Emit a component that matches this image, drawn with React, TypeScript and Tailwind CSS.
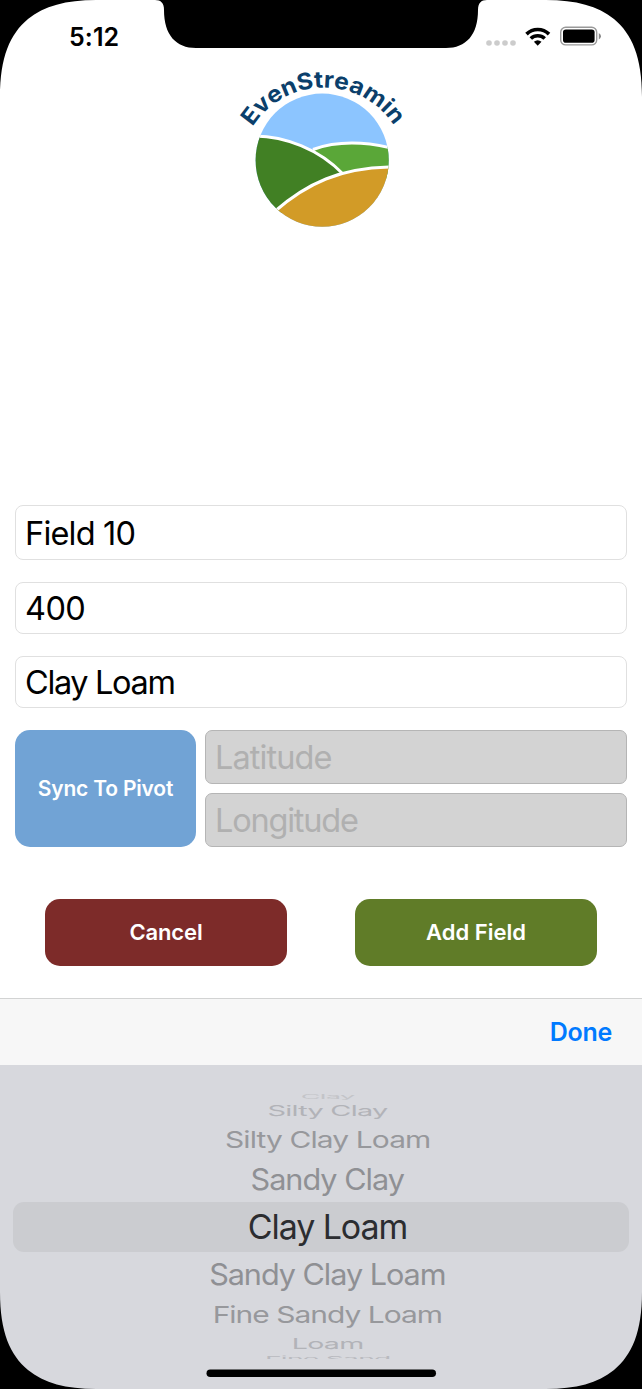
import React from "react";

const soils = [
  { name: "Clay", row: "mt-[27px] h-[9px]", text: "text-[#c3c4c8] tracking-[-0.9px] scale-x-[0.8] scale-y-[0.17]" },
  { name: "Silty Clay", row: "h-[20px]", text: "text-[#b2b3b8] tracking-[-0.9px] scale-x-[0.85] scale-y-[0.43]" },
  { name: "Silty Clay Loam", row: "h-[38px]", text: "text-[#97989c] tracking-[-1px] scale-x-[0.88] scale-y-[0.68]" },
  { name: "Sandy Clay", row: "h-[42px]", text: "text-[#8f9094] tracking-[-1.1px] scale-x-[0.9] scale-y-[0.87]" },
  { name: "Clay Loam", row: "h-[52px]", text: "text-[#2c2d30] tracking-[-1.1px]" },
  { name: "Sandy Clay Loam", row: "h-[43px]", text: "text-[#8f9094] tracking-[-1.15px] scale-x-[0.9] scale-y-[0.87]" },
  { name: "Fine Sandy Loam", row: "h-[38px]", text: "text-[#97989c] tracking-[-1.1px] scale-x-[0.88] scale-y-[0.68]" },
  { name: "Loam", row: "h-[20px]", text: "text-[#b2b3b8] tracking-[-0.9px] scale-x-[0.84] scale-y-[0.43]" },
  { name: "Fine Sand", row: "h-[9px]", text: "text-[#b9babf] tracking-[-0.9px] scale-x-[0.83] scale-y-[0.22]" },
];

function Logo() {
  return (
    <svg width="190" height="180" viewBox="225 60 190 180">
      <defs>
        <clipPath id="disc"><circle cx="322.2" cy="160.2" r="66.6" /></clipPath>
        <path id="arc" d="M252.500 127A84 84 0 0 1 396 129" />
      </defs>
      <g clipPath="url(#disc)">
        <rect x="250" y="90" width="145" height="140" fill="#8cc5ff" />
        <path d="M313 149.5Q348 137 395 149V180L343 175Z" fill="#5aa738" />
        <path d="M313 149.5Q348 137 395 149" fill="none" stroke="#fff" strokeWidth="3" />
        <path d="M250 136C285 135 320 150 343 174L278 215L250 225Z" fill="#418024" />
        <path d="M250 136C285 135 320 150 343 174" fill="none" stroke="#fff" strokeWidth="3" />
        <path d="M274 212C306 184 340 167 395 167V235H260Z" fill="#d29b27" />
        <path d="M274 212C306 184 340 167 395 167" fill="none" stroke="#fff" strokeWidth="3" />
      </g>
      <text fill="#0b3f6b" fontSize="23" fontWeight="700" className="font-[Inter,sans-serif]">
        <textPath href="#arc" textLength="168" lengthAdjust="spacingAndGlyphs">EvenStreamin</textPath>
      </text>
    </svg>
  );
}

function StatusIcons() {
  return (
    <svg className="ml-auto mt-[22px] mr-[38px]" width="120" height="28" viewBox="484 22 120 28">
      {[489, 497, 505, 513].map((x) => <circle key={x} cx={x} cy="43" r="2.8" fill="#ccc" />)}
      <g fill="none" stroke="#000" strokeWidth="3.6">
        <path d="M526.5 34.1A16 16 0 0 1 549 34.1" />
        <path d="M530.8 38.5A10 10 0 0 1 544.7 38.5" />
      </g>
      <path d="M533.9 41.7Q537.7 38.6 541.5 41.7L537.7 45.7Z" fill="#000" />
      <rect x="560.7" y="27.3" width="36" height="17.6" rx="5" fill="none" stroke="#999" strokeWidth="1.4" />
      <rect x="563" y="29.5" width="31.6" height="13.2" rx="2.8" fill="#000" />
      <path d="M598.8 33v6.4Q601 38 601 36.2T598.8 33Z" fill="#888" />
    </svg>
  );
}

function Bezel() {
  const corner = "M0 0H96C66 0 44 6 28 19C10 34 0 57 0 97Z";
  return (
    <svg className="pointer-events-none absolute inset-0" width="642" height="1389" viewBox="0 0 642 1389">
      <path d={corner} />
      <path d={corner} transform="translate(642 0) scale(-1 1)" />
      <path d={corner} transform="translate(0 1389) scale(1 -1)" />
      <path d={corner} transform="translate(642 1389) scale(-1 -1)" />
      <path d="M155 0C161 0 164 3 164 10C164 35 176 48 196 48H446C466 48 478 35 478 10C478 3 481 0 487 0Z" />
      <rect x="206.500" y="1369.500" width="229.500" height="7.500" rx="3.750" />
    </svg>
  );
}

export default function App() {
  return (
    <main className="relative flex h-[1389px] w-[642px] flex-col overflow-hidden bg-white font-[Inter,sans-serif] text-black">
      <header className="flex h-[60px]">
        <span className="ml-[69px] mt-[19px] text-[25px] leading-9 font-semibold tracking-[0.1px]">5:12</span>
        <StatusIcons />
      </header>
      <div className="flex h-[445px] justify-center pr-[2px]"><Logo /></div>
      <form className="flex flex-col px-[15px]">
        <div className="flex h-[55px] items-center rounded-[8px] border border-[#e0e0e0] px-[9px] pt-[3px] text-[32.500px] tracking-[-0.8px]">Field 10</div>
        <div className="mt-[22px] flex h-[52px] items-center rounded-[8px] border border-[#e0e0e0] px-[9px] pt-[2px] text-[32.500px] tracking-[-0.6px]">400</div>
        <div className="mt-[22px] flex h-[52px] items-center rounded-[8px] border border-[#e0e0e0] px-[9px] pt-[2px] text-[32.500px] tracking-[-1.35px]">Clay Loam</div>
        <div className="mt-[22px] flex h-[117px] gap-[9px]">
          <button type="button" className="w-[181px] rounded-[15px] bg-[#71a3d5] pt-[1px] text-[21px] font-semibold tracking-[-0.2px] text-white">Sync To Pivot</button>
          <div className="flex flex-1 flex-col gap-[9px] text-[32.500px] text-[#b0b0b0]">
            <div className="flex flex-1 items-center rounded-[7px] border border-[#b5b5b5] bg-[#d3d3d3] px-[9px] pt-[2px] tracking-[-0.9px]">Latitude</div>
            <div className="flex flex-1 items-center rounded-[7px] border border-[#b5b5b5] bg-[#d3d3d3] px-[9px] pt-[2px] tracking-[-1.2px]">Longitude</div>
          </div>
        </div>
        <div className="mt-[52px] flex h-[67px] justify-between px-[30px] text-[22px] font-semibold text-white">
          <button type="button" className="w-[242px] rounded-[15px] bg-[#7d2b29] tracking-[-0.15px]">Cancel</button>
          <button type="button" className="w-[242px] rounded-[15px] bg-[#607c28]">Add Field</button>
        </div>
      </form>
      <div className="mt-[32px] flex h-[67px] items-center justify-end border-t border-[#d2d3d3] bg-[#f7f7f7] pt-[2px] pr-[30px] text-[25px] font-semibold tracking-[-0.3px] text-[#007aff]">Done</div>
      <section className="relative flex flex-1 flex-col bg-[#d7d8dd] text-[34px] leading-none">
        <div className="absolute top-[137px] right-[13px] left-[13px] h-[50px] rounded-[11px] bg-[#cbccd0]" />
        <div className="relative flex h-[294px] flex-col overflow-hidden pl-[13px]">
          {soils.map((s) => (
            <div key={s.name} className={"flex shrink-0 items-center justify-center " + s.row}>
              <span className={"whitespace-nowrap " + s.text}>{s.name}</span>
            </div>
          ))}
        </div>
      </section>
      <Bezel />
    </main>
  );
}
